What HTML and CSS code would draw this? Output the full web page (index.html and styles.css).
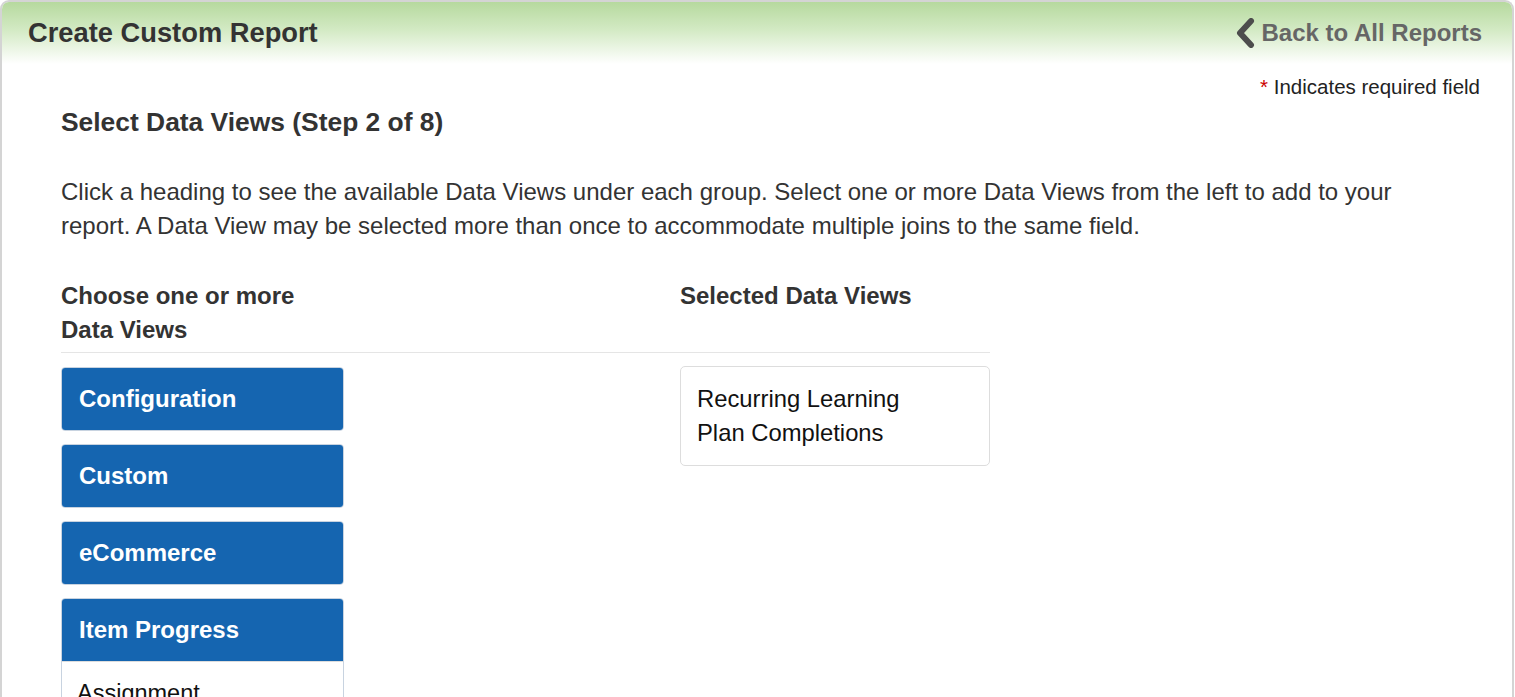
FILE: index.html
```html
<!DOCTYPE html>
<html>
<head>
<meta charset="utf-8">
<link rel="stylesheet" href="styles.css">
</head>
<body>
<div class="panel">
  <div class="panel-header">
    <h1 class="title">Create Custom Report</h1>
    <a class="back" href="#">
      <svg class="chev" width="22" height="30" viewBox="0 0 22 30"><path d="M17 3 L6 15 L17 27" fill="none" stroke="#4d4d4d" stroke-width="6" stroke-linecap="round" stroke-linejoin="round"/></svg>
      Back to All Reports
    </a>
  </div>
  <div class="panel-body">
    <div class="required"><span class="star">*</span> Indicates required field</div>
    <h2 class="step">Select Data Views (Step 2 of 8)</h2>
    <p class="intro">Click a heading to see the available Data Views under each group. Select one or more Data Views from the left to add to your report. A Data View may be selected more than once to accommodate multiple joins to the same field.</p>
    <div class="cols">
      <div class="col-left">
        <div class="col-head">Choose one or more<br>Data Views</div>
      </div>
      <div class="col-right">
        <div class="col-head">Selected Data Views</div>
      </div>
    </div>
    <div class="divider"></div>
    <div class="cols">
      <div class="col-left">
        <div class="groups">
          <div class="group"><div class="group-head">Configuration</div></div>
          <div class="group"><div class="group-head">Custom</div></div>
          <div class="group"><div class="group-head">eCommerce</div></div>
          <div class="group open">
            <div class="group-head">Item Progress</div>
            <div class="group-body">
              <div class="item">Assignment</div>
            </div>
          </div>
        </div>
      </div>
      <div class="col-right">
        <div class="selected">Recurring Learning<br>Plan Completions</div>
      </div>
    </div>
  </div>
</div>
</body>
</html>
```
FILE: styles.css
```css
html, body {
  margin: 0;
  padding: 0;
  background: #fff;
  font-family: "Liberation Sans", Arial, sans-serif;
  color: #333;
  overflow: hidden;
}
.panel {
  width: 1510px;
  border: 2px solid #d4d4d4;
  border-bottom: none;
  border-radius: 9px 9px 0 0;
  min-height: 720px;
}
.panel-header {
  height: 62px;
  display: flex;
  align-items: center;
  justify-content: space-between;
  padding: 0 30px 0 26px;
  background: linear-gradient(to bottom, #b6d99e 0%, #d3eac4 45%, #ffffff 100%);
  border-radius: 7px 7px 0 0;
}
.title {
  margin: 0;
  font-size: 27.3px;
  font-weight: bold;
  color: #333;
}
.back {
  display: flex;
  align-items: center;
  gap: 6px;
  font-size: 24px;
  font-weight: bold;
  color: #666;
  text-decoration: none;
}
.chev { display: block; }
.panel-body {
  padding: 0 32px 0 59px;
}
.required {
  text-align: right;
  font-size: 20.5px;
  color: #222;
  margin-top: 11px;
  line-height: 24px;
}
.star { color: #c00; }
.step {
  margin: 8px 0 0;
  font-size: 26.4px;
  font-weight: bold;
  line-height: 30px;
  color: #333;
}
.intro {
  margin: 38px 0 0;
  max-width: 1350px;
  font-size: 24px;
  line-height: 34px;
  color: #333;
}
.cols {
  display: flex;
}
.col-left { width: 619px; }
.col-right { width: 310px; }
.col-head {
  margin-top: 36px;
  font-size: 24px;
  font-weight: bold;
  line-height: 34px;
  color: #333;
}
.divider {
  width: 929px;
  border-top: 1px solid #e5e5e5;
  margin-top: 5px;
}
.groups {
  margin-top: 14px;
  width: 283px;
  display: flex;
  flex-direction: column;
  gap: 13px;
}
.group {
  border: 1px solid #c8d3e0;
  border-radius: 4px;
  overflow: hidden;
}
.group-head {
  background: #1565b0;
  color: #fff;
  font-size: 24px;
  font-weight: bold;
  height: 62px;
  line-height: 62px;
  padding-left: 17px;
}
.group-body {
  background: #fff;
  border-top: 1px solid #ddd;
}
.item {
  padding: 18px 15px;
  font-size: 23.5px;
  color: #111;
}
.selected {
  margin-top: 13px;
  border: 1px solid #ddd;
  border-radius: 5px;
  padding: 15px 15px 15px 16px;
  font-size: 23.8px;
  line-height: 34px;
  color: #111;
}
```
